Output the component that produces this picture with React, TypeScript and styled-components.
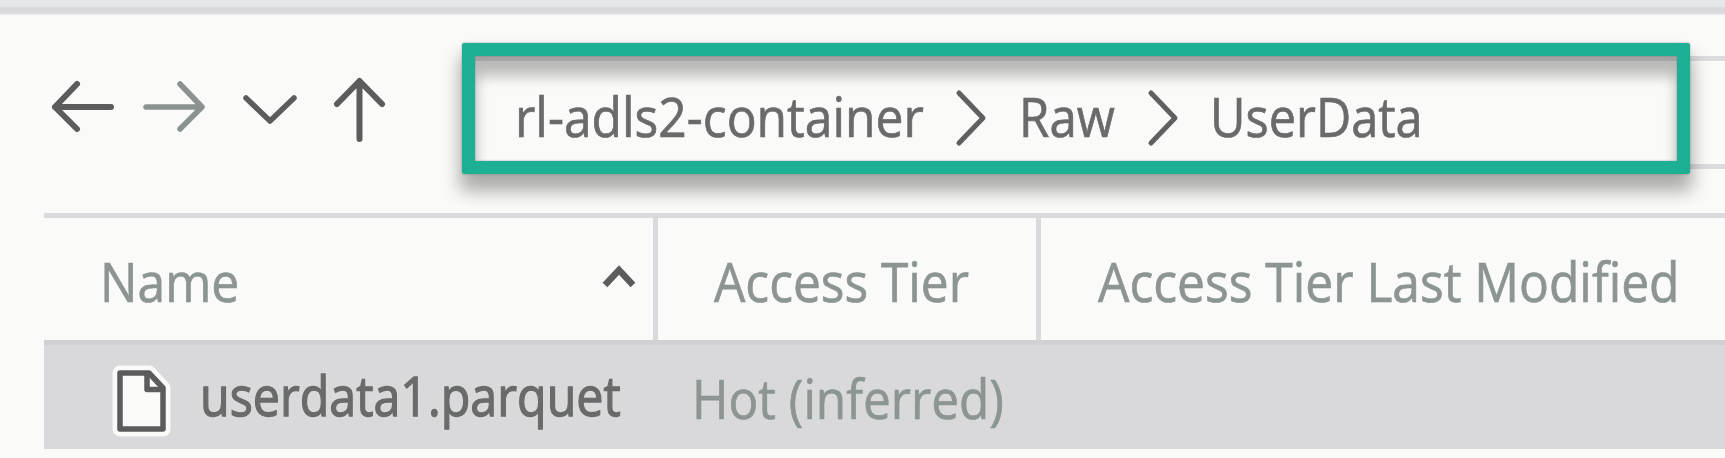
import React from "react";
import styled, { createGlobalStyle } from "styled-components";

const GlobalStyle = createGlobalStyle`
  *, *::before, *::after { box-sizing: border-box; }
  html, body { margin: 0; padding: 0; overflow: hidden; }
  body { background: #fafaf8; font-family: "Open Sans", "Noto Sans", sans-serif; }
`;

const Window = styled.main`
  display: flex;
  flex-direction: column;
  width: 1725px;
  height: 458px;
  overflow: hidden;
  background: #fafaf8;
`;

const TopEdge = styled.div`
  flex: none;
  height: 15px;
  background: linear-gradient(#e6e7ea 0 6px, #d9d9db 8px 13px, #e9eaec 14px 15px);
`;

const Toolbar = styled.header`
  flex: none;
  display: flex;
  height: 198px;
`;

const NavButtons = styled.nav`
  flex: none;
  display: flex;
  width: 462px;
  padding: 60px 0 0 50px;
`;

const NavButton = styled.button<{ $width: number; $muted?: boolean }>`
  flex: none;
  display: flex;
  align-items: flex-start;
  width: ${(p) => p.$width}px;
  height: 72px;
  padding: 0;
  border: 0;
  background: none;
  color: ${(p) => (p.$muted ? "#8b9391" : "#5c5c5c")};
`;

const Glyph = styled.svg`
  display: block;
  overflow: visible;
  fill: none;
  stroke: currentColor;
  stroke-linecap: round;
  stroke-linejoin: round;
`;

const AddressField = styled.div`
  flex: 1;
  height: 113px;
  margin-top: 41px;
  border: solid #dcdcde;
  border-width: 5px 0;
`;

const Highlight = styled.div`
  display: flex;
  align-items: flex-start;
  width: 1228px;
  height: 131px;
  margin-top: -18px;
  padding: 34px 0 0 40px;
  border: 13px solid #1eb094;
  border-radius: 2px;
  box-shadow:
    0 0 2px rgba(90, 90, 90, 0.6),
    0 15px 18px 2px rgba(0, 0, 0, 0.32),
    inset 0 0 2px rgba(90, 90, 90, 0.6),
    inset 0 19px 14px 1px rgba(0, 0, 0, 0.26);
`;

const Slot = styled.div<{ $width: number }>`
  flex: none;
  width: ${(p) => p.$width}px;
`;

const Label = styled.span<{ $stretch: number; $tone: string; $weight?: number }>`
  display: block;
  width: max-content;
  color: ${(p) => p.$tone};
  font-size: 55px;
  line-height: 60px;
  white-space: pre;
  -webkit-text-stroke: ${(p) => p.$weight ?? 0.7}px currentColor;
  transform: scaleX(${(p) => p.$stretch});
  transform-origin: left;
`;

const CrumbLabel = styled(Label)`
  margin-top: -4px;
`;

const Table = styled.section`
  flex: none;
  margin-left: 44px;
`;

const HeaderRow = styled.div`
  display: flex;
  height: 127px;
  border-top: 5px solid #dadadc;
`;

const HeaderCell = styled.div<{ $width: number; $indent: number }>`
  flex: none;
  display: flex;
  width: ${(p) => p.$width}px;
  padding: 33px 0 0 ${(p) => p.$indent}px;
  border-right: 5px solid #dadadc;
`;

const SortGlyph = styled(Glyph)`
  margin: 14px 17px 0 auto;
  stroke-linecap: butt;
  stroke-linejoin: miter;
`;

const FileRow = styled.div`
  display: flex;
  height: 109px;
  padding-left: 73px;
  border-top: 5px solid #d1d1d3;
  background: #d9d9db;
`;

const FileGlyph = styled(Glyph)`
  margin-top: 25px;
`;

const FileName = styled(Slot)`
  padding-top: 20px;
`;

const Tier = styled(Slot)`
  padding-top: 23px;
`;

const Chevron = () => (
  <Glyph width="30" height="56" viewBox="0 0 30 56" strokeWidth="5" color="#5f6060">
    <path d="M3 3 27 28 3 53" />
  </Glyph>
);

const DARK = "#696b6b";
const MUTED = "#8d9593";

export default function App() {
  return (
    <>
      <GlobalStyle />
      <Window>
        <TopEdge />
        <Toolbar>
          <NavButtons>
            <NavButton $width={92} aria-label="Back">
              <Glyph width="64" height="64" viewBox="0 0 64 64" strokeWidth="6">
                <path d="M61 32H5M27 9 5 32 27 54" />
              </Glyph>
            </NavButton>
            <NavButton $width={100} $muted aria-label="Forward">
              <Glyph width="64" height="64" viewBox="0 0 64 64" strokeWidth="5.500">
                <path d="M4 32H60M38 9 60 32 38 54" />
              </Glyph>
            </NavButton>
            <NavButton $width={90} aria-label="Recent">
              <Glyph width="56" height="64" viewBox="0 0 56 64" strokeWidth="5.500">
                <path d="M4 23 28 46 52 23" />
              </Glyph>
            </NavButton>
            <NavButton $width={60} aria-label="Up">
              <Glyph width="56" height="72" viewBox="0 0 56 72" strokeWidth="6">
                <path d="M27.500 64V6M5 29 27.500 6 50 29" />
              </Glyph>
            </NavButton>
          </NavButtons>
          <AddressField>
            <Highlight>
              <Slot $width={441}>
                <CrumbLabel $stretch={0.905} $tone={DARK}>rl-adls2-container</CrumbLabel>
              </Slot>
              <Slot $width={63}><Chevron /></Slot>
              <Slot $width={129}>
                <CrumbLabel $stretch={0.895} $tone={DARK}>Raw</CrumbLabel>
              </Slot>
              <Slot $width={62}><Chevron /></Slot>
              <Slot $width={220}>
                <CrumbLabel $stretch={0.885} $tone={DARK}>UserData</CrumbLabel>
              </Slot>
            </Highlight>
          </AddressField>
        </Toolbar>
        <Table>
          <HeaderRow>
            <HeaderCell $width={614} $indent={56}>
              <Label $stretch={0.905} $tone={MUTED}>Name</Label>
              <SortGlyph width="34" height="24" viewBox="0 0 34 24" strokeWidth="6.500" color="#5c5c5c">
                <path d="M3 20 17 5 31 20" />
              </SortGlyph>
            </HeaderCell>
            <HeaderCell $width={383} $indent={56}>
              <Label $stretch={0.902} $tone={MUTED}>Access Tier</Label>
            </HeaderCell>
            <HeaderCell $width={800} $indent={57}>
              <Label $stretch={0.904} $tone={MUTED}>Access Tier Last Modified</Label>
            </HeaderCell>
          </HeaderRow>
          <FileRow>
            <Slot $width={83}>
              <FileGlyph width="49" height="62" viewBox="0 0 49 62" strokeWidth="5.500">
                <path d="M3 3H32L46 18V59H3Z" stroke="#fafaf8" strokeWidth="15" />
                <path d="M3 3H32L46 18V59H3Z" fill="#fafaf8" stroke="#5c5c5c" />
                <path d="M30 4V19.500H45" stroke="#5c5c5c" />
              </FileGlyph>
            </Slot>
            <FileName $width={492}>
              <Label $stretch={0.88} $tone={DARK} $weight={1.3}>userdata1.parquet</Label>
            </FileName>
            <Tier $width={400}>
              <Label $stretch={0.9} $tone={MUTED}>Hot (inferred)</Label>
            </Tier>
          </FileRow>
        </Table>
      </Window>
    </>
  );
}
